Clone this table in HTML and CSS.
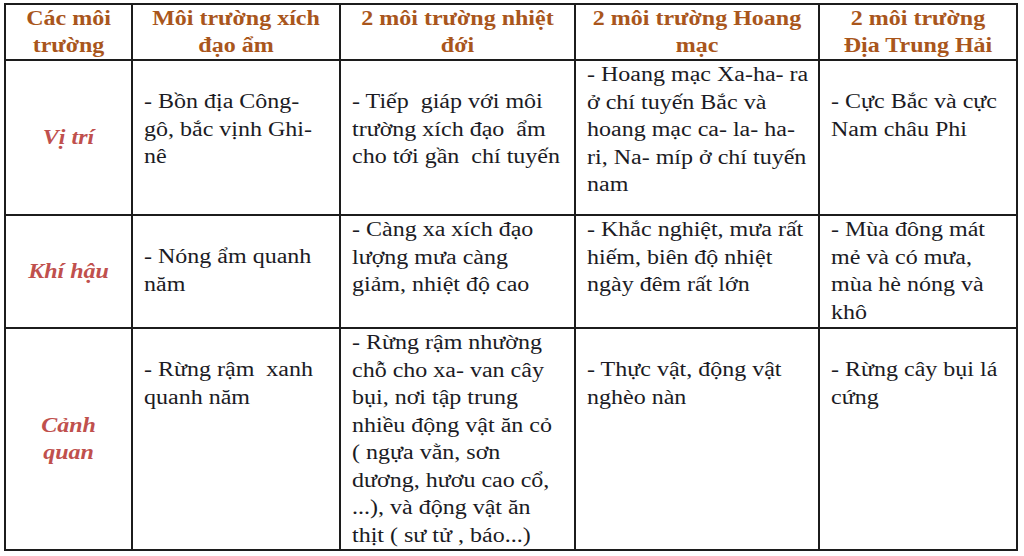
FILE: index.html
```html
<!DOCTYPE html>
<html lang="vi">
<head>
<meta charset="utf-8">
<link rel="stylesheet" href="styles.css">
</head>
<body>
<table class="grid">
  <colgroup>
    <col class="c1"><col class="c2"><col class="c3"><col class="c4"><col class="c5">
  </colgroup>
  <tr class="r-head">
    <th><div class="txt">Các môi<br>trường</div></th>
    <th><div class="txt">Môi trường xích<br>đạo ẩm</div></th>
    <th><div class="txt">2 môi trường nhiệt<br>đới</div></th>
    <th><div class="txt">2 môi trường Hoang<br>mạc</div></th>
    <th><div class="txt">2 môi trường<br>Địa Trung Hải</div></th>
  </tr>
  <tr class="r-1">
    <td class="label"><div class="txt">Vị trí</div></td>
    <td class="lead"><div class="txt">- Bồn địa Công-<br>gô, bắc vịnh Ghi-<br>nê</div></td>
    <td class="lead"><div class="txt">- Tiếp&nbsp; giáp với môi<br>trường xích đạo&nbsp; ẩm<br>cho tới gần&nbsp; chí tuyến</div></td>
    <td><div class="txt">- Hoang mạc Xa-ha- ra<br>ở chí tuyến Bắc và<br>hoang mạc ca- la- ha-<br>ri, Na- míp ở chí tuyến<br>nam</div></td>
    <td class="lead"><div class="txt">- Cực Bắc và cực<br>Nam châu Phi</div></td>
  </tr>
  <tr class="r-2">
    <td class="label"><div class="txt">Khí hậu</div></td>
    <td class="lead"><div class="txt">- Nóng ẩm quanh<br>năm</div></td>
    <td><div class="txt">- Càng xa xích đạo<br>lượng mưa càng<br>giảm, nhiệt độ cao</div></td>
    <td><div class="txt">- Khắc nghiệt, mưa rất<br>hiếm, biên độ nhiệt<br>ngày đêm rất lớn</div></td>
    <td><div class="txt">- Mùa đông mát<br>mẻ và có mưa,<br>mùa hè nóng và<br>khô</div></td>
  </tr>
  <tr class="r-3">
    <td class="label"><div class="txt">Cảnh<br>quan</div></td>
    <td class="lead"><div class="txt">- Rừng rậm&nbsp; xanh<br>quanh năm</div></td>
    <td><div class="txt">- Rừng rậm nhường<br>chỗ cho xa- van cây<br>bụi, nơi tập trung<br>nhiều động vật ăn cỏ<br>( ngựa vằn, sơn<br>dương, hươu cao cổ,<br>...), và động vật ăn<br>thịt ( sư tử , báo...)</div></td>
    <td class="lead"><div class="txt">- Thực vật, động vật<br>nghèo nàn</div></td>
    <td class="lead"><div class="txt">- Rừng cây bụi lá<br>cứng</div></td>
  </tr>
</table>
</body>
</html>
```

FILE: styles.css
```css
html, body {
  margin: 0;
  padding: 0;
  background: #ffffff;
}

body {
  padding: 3px 0 0 4px;
}

.grid {
  border-collapse: collapse;
  table-layout: fixed;
  width: 1014px;
}

.c1 { width: 127px; }
.c2 { width: 208px; }
.c3 { width: 235px; }
.c4 { width: 244px; }
.c5 { width: 198px; }

.grid th,
.grid td {
  font-family: "Liberation Serif", "DejaVu Serif", serif;
  border: 2px solid #1c1c1c;
  font-size: 20px;
  line-height: 27.5px;
  white-space: nowrap;
}

.txt {
  transform: scaleX(1.2);
  transform-origin: left center;
}

.grid th {
  color: #a9561c;
  font-weight: bold;
  text-align: center;
  vertical-align: middle;
  line-height: 27px;
  padding: 0;
}

.grid th .txt,
.grid td.label .txt {
  transform-origin: center center;
}

.grid td {
  color: #1b1b24;
  text-align: left;
  vertical-align: top;
  padding: 0 4px 0 11px;
}

.grid td.lead {
  padding-top: 27px;
}

.grid td.label {
  color: #c0504d;
  font-weight: bold;
  font-style: italic;
  text-align: center;
  vertical-align: middle;
  line-height: 27px;
  padding: 0;
}

.r-head { height: 55px; }
.r-1 { height: 155px; }
.r-2 { height: 113px; }
.r-3 { height: 222px; }
```
